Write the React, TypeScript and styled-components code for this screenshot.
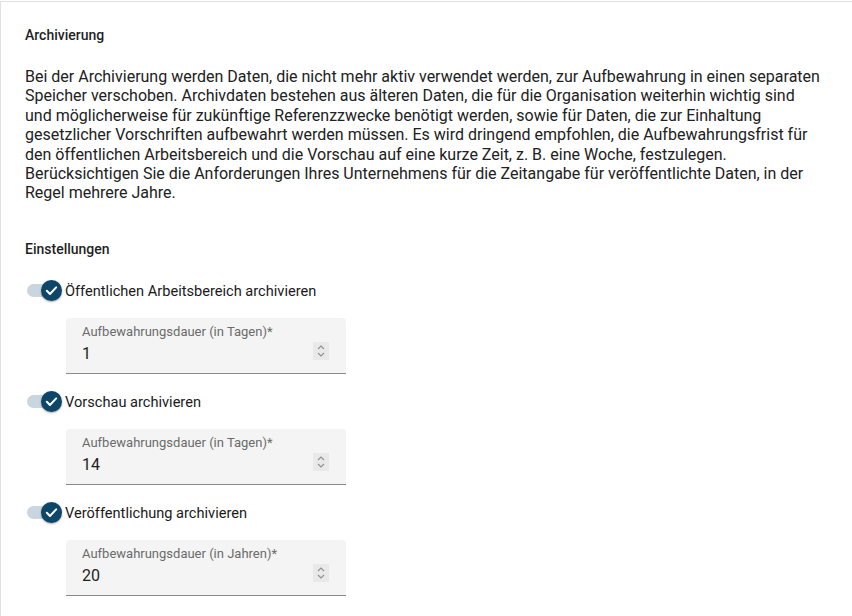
import { FC } from "react";
import styled, { createGlobalStyle } from "styled-components";

const GlobalStyle = createGlobalStyle`
  html, body {
    margin: 0;
    padding: 0;
    background: #ffffff;
    font-family: Roboto, "Liberation Sans", sans-serif;
    color: #212121;
  }
`;

const Page = styled.div`
  box-sizing: border-box;
  width: 852px;
  height: 616px;
  margin-top: 1px;
  border-top: 1px solid #e2e2e2;
  border-left: 1px solid #e2e2e2;
  padding: 24px 31px 0 24px;
  overflow: hidden;
`;

const SectionTitle = styled.h2`
  margin: 0;
  font-size: 14px;
  font-weight: 500;
  line-height: 18px;
  color: #1f1f1f;
`;

const Paragraph = styled.p`
  margin: 23px 0 0 0;
  font-size: 16px;
  line-height: 19.4px;
  color: #212121;
`;

const SubTitle = styled(SectionTitle)`
  margin-top: 37px;
`;

const SettingsList = styled.div`
  display: flex;
  flex-direction: column;
  margin-top: 21px;
`;

const SettingBlock = styled.div`
  display: flex;
  flex-direction: column;
  gap: 15px;
  margin-bottom: 16px;
`;

const ToggleRow = styled.label`
  display: flex;
  align-items: center;
  gap: 6px;
  height: 24px;
  font-size: 14.6px;
  color: #1a1a1a;
`;

const Track = styled.span`
  position: relative;
  display: inline-block;
  width: 32px;
  height: 13px;
  margin-left: 2px;
  border-radius: 7px;
  background: #c9d6df;
`;

const Thumb = styled.span`
  position: absolute;
  top: -4px;
  right: -3px;
  width: 21px;
  height: 21px;
  border-radius: 50%;
  background: #0e4669;
  box-shadow: 0 1px 2px rgba(0, 0, 0, 0.35);
  display: flex;
  align-items: center;
  justify-content: center;
`;

const Field = styled.div`
  box-sizing: border-box;
  margin-left: 41px;
  width: 280px;
  height: 56px;
  display: flex;
  align-items: center;
  padding: 0 16px;
  background: #f4f4f4;
  border-radius: 4px 4px 0 0;
  border-bottom: 1px solid #8a8a8a;
`;

const FieldText = styled.div`
  flex: 1;
  align-self: flex-start;
  display: flex;
  flex-direction: column;
  padding-top: 6px;
`;

const FieldLabel = styled.span`
  font-size: 13px;
  line-height: 16px;
  color: #6b6b6b;
`;

const FieldValue = styled.span`
  margin-top: 3px;
  font-size: 16px;
  line-height: 22px;
  color: #1f1f1f;
`;

const Spinner = styled.span`
  width: 16px;
  height: 18px;
  margin-right: 1px;
  margin-top: 12px;
  background: #e9e9e9;
  display: flex;
  align-items: center;
  justify-content: center;
`;

const Check: FC = () => (
  <svg width="15" height="15" viewBox="0 0 24 24">
    <path
      d="M4.5 12.5l5 5L19.5 7"
      fill="none"
      stroke="#ffffff"
      strokeWidth="3.2"
      strokeLinecap="round"
      strokeLinejoin="round"
    />
  </svg>
);

const Arrows: FC = () => (
  <svg width="10" height="14" viewBox="0 0 10 14">
    <path d="M2 5l3-3 3 3M2 9l3 3 3-3" fill="none" stroke="#8f8f8f" strokeWidth="1.1" />
  </svg>
);

interface Setting {
  label: string;
  field: string;
  value: string;
}

const settings: Setting[] = [
  {
    label: "Öffentlichen Arbeitsbereich archivieren",
    field: "Aufbewahrungsdauer (in Tagen)*",
    value: "1",
  },
  {
    label: "Vorschau archivieren",
    field: "Aufbewahrungsdauer (in Tagen)*",
    value: "14",
  },
  {
    label: "Veröffentlichung archivieren",
    field: "Aufbewahrungsdauer (in Jahren)*",
    value: "20",
  },
];

const App: FC = () => {
  return (
    <>
      <GlobalStyle />
      <Page>
        <SectionTitle>Archivierung</SectionTitle>
        <Paragraph>
          Bei der Archivierung werden Daten, die nicht mehr aktiv verwendet
          werden, zur Aufbewahrung in einen separaten Speicher verschoben.
          Archivdaten bestehen aus älteren Daten, die für die Organisation
          weiterhin wichtig sind und möglicherweise für zukünftige
          Referenzzwecke benötigt werden, sowie für Daten, die zur Einhaltung
          gesetzlicher Vorschriften aufbewahrt werden müssen. Es wird dringend
          empfohlen, die Aufbewahrungsfrist für den öffentlichen
          Arbeitsbereich und die Vorschau auf eine kurze Zeit, z. B. eine
          Woche, festzulegen. Berücksichtigen Sie die Anforderungen Ihres
          Unternehmens für die Zeitangabe für veröffentlichte Daten, in der
          Regel mehrere Jahre.
        </Paragraph>
        <SubTitle>Einstellungen</SubTitle>
        <SettingsList>
          {settings.map((s) => (
            <SettingBlock key={s.label}>
              <ToggleRow>
                <Track>
                  <Thumb>
                    <Check />
                  </Thumb>
                </Track>
                <span>{s.label}</span>
              </ToggleRow>
              <Field>
                <FieldText>
                  <FieldLabel>{s.field}</FieldLabel>
                  <FieldValue>{s.value}</FieldValue>
                </FieldText>
                <Spinner>
                  <Arrows />
                </Spinner>
              </Field>
            </SettingBlock>
          ))}
        </SettingsList>
      </Page>
    </>
  );
};

export default App;
